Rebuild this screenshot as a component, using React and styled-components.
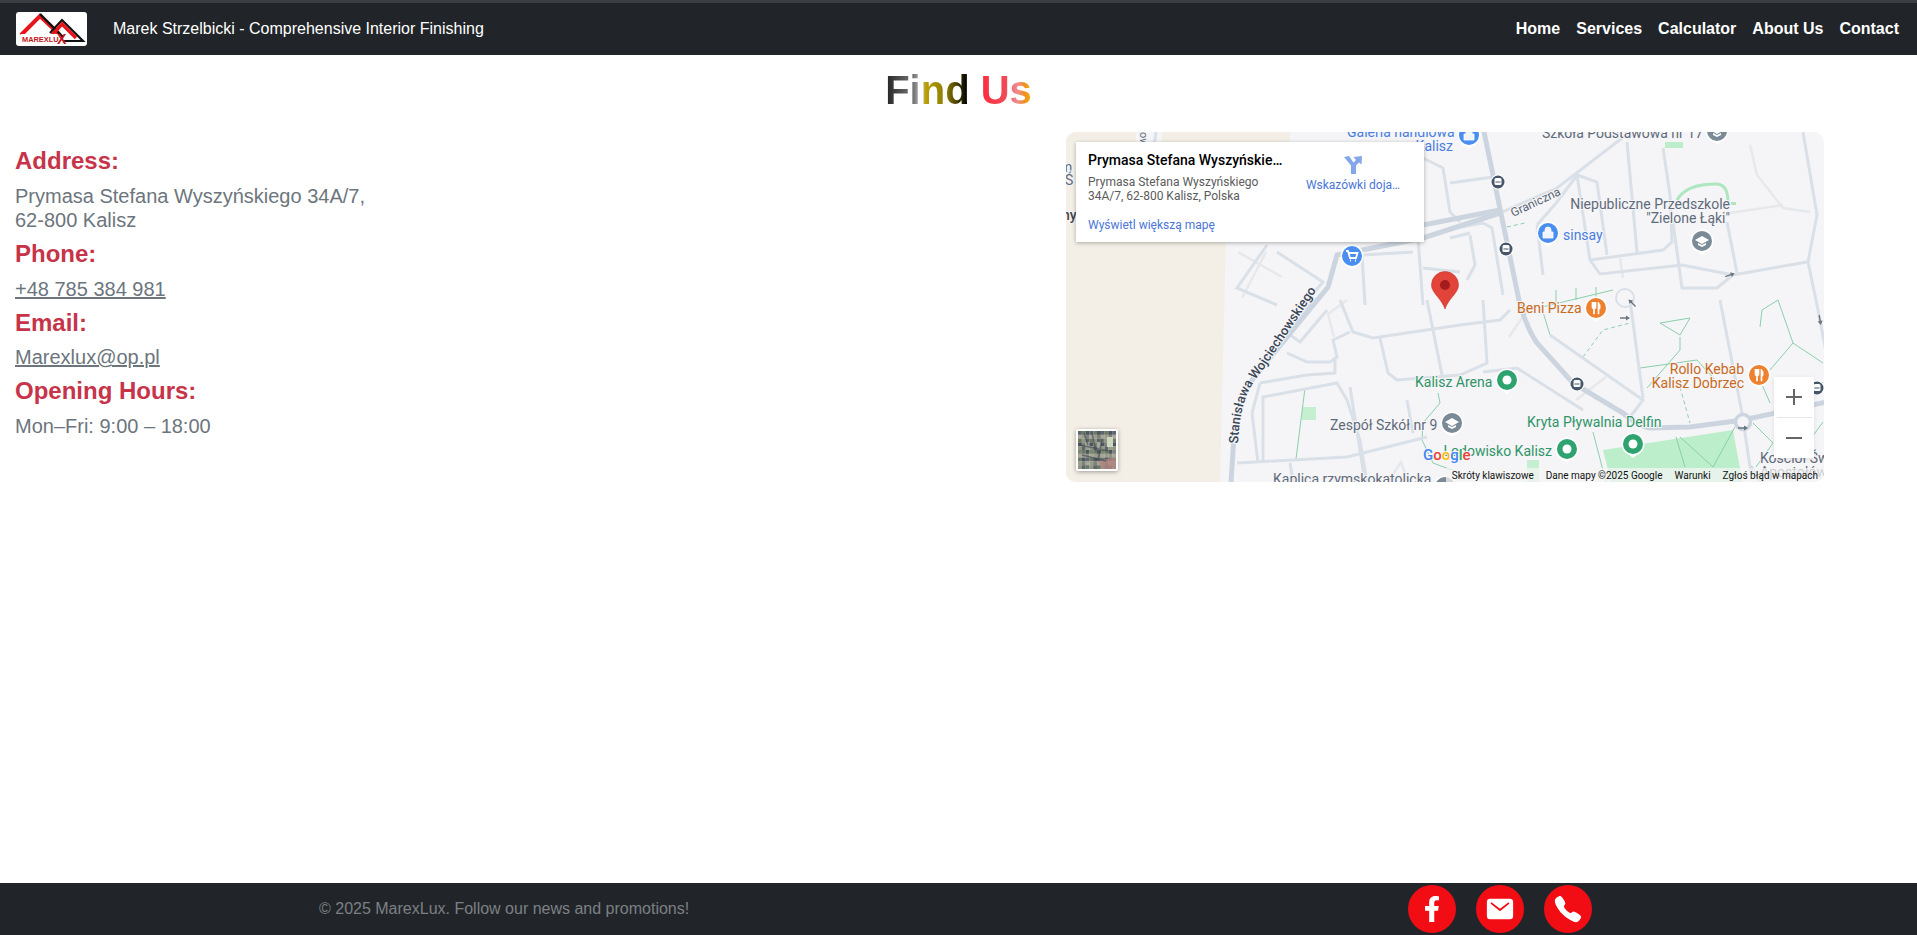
import React from "react";
import styled, { createGlobalStyle } from "styled-components";
import { FaFacebookF } from "react-icons/fa";
import { IoMail, IoCall } from "react-icons/io5";

const GlobalStyle = createGlobalStyle`
  html, body {
    margin: 0;
    padding: 0;
    background: #fff;
    font-family: "Liberation Sans", Arial, sans-serif;
  }
`;

const Page = styled.div`
  min-height: 935px;
  display: flex;
  flex-direction: column;
`;

const Header = styled.header`
  height: 52px;
  border-top: 3px solid #3b3f43;
  background: #212529;
  display: flex;
  align-items: center;
  padding: 0 18px 0 16px;
`;

const LogoBox = styled.div`
  width: 71px;
  height: 34px;
  background: #fff;
  border-radius: 3px;
  margin-right: 26px;
  svg {
    display: block;
  }
`;

const Brand = styled.span`
  color: #fff;
  font-size: 16px;
`;

const Nav = styled.nav`
  margin-left: auto;
  display: flex;
  gap: 16px;
  a {
    color: #fff;
    font-size: 16px;
    font-weight: 700;
    text-decoration: none;
  }
`;

const Main = styled.main`
  flex: 1;
`;

const Title = styled.h1`
  margin: 11px 0 18px;
  font-size: 40px;
  line-height: 48px;
  font-weight: 700;
  text-align: center;
  span {
    display: inline-block;
    color: transparent;
    background: linear-gradient(
      90deg,
      #222 0%,
      #7a7a7a 20%,
      #bbb 24%,
      #b8a000 28%,
      #8a7a00 42%,
      #000 56%,
      #ff3040 68%,
      #f04a58 82%,
      #f08a90 90%,
      #f09020 95%,
      #f5b000 100%
    );
    -webkit-background-clip: text;
    background-clip: text;
  }
`;

const Row = styled.section`
  display: flex;
  justify-content: space-between;
  padding: 0 93px 0 15px;
`;

const Info = styled.div`
  padding-top: 15px;
`;

const Label = styled.h3`
  margin: 0 0 8px;
  color: #c7344a;
  font-size: 24px;
  line-height: 28.8px;
  font-weight: 700;
`;

const Value = styled.p`
  margin: 0 0 8px;
  color: #6c757d;
  font-size: 20px;
  line-height: 24px;
  a {
    color: inherit;
  }
`;

const MapFrame = styled.div`
  position: relative;
  width: 758px;
  height: 350px;
  border-radius: 10px;
  overflow: hidden;
  background: #f5f5f7;
  font-family: Roboto, Arial, sans-serif;
  > svg {
    display: block;
  }
`;

const PlaceCard = styled.div`
  position: absolute;
  left: 10px;
  top: 10px;
  width: 348px;
  height: 100px;
  box-sizing: border-box;
  padding: 10px 12px;
  background: #fff;
  box-shadow: 0 1px 4px rgba(0, 0, 0, 0.3);
  display: flex;
  justify-content: space-between;
`;

const PlaceName = styled.div`
  width: 200px;
  font-size: 14px;
  line-height: 17px;
  font-weight: 500;
  color: #000;
  white-space: nowrap;
  overflow: hidden;
  text-overflow: ellipsis;
`;

const PlaceAddress = styled.div`
  margin-top: 6px;
  width: 180px;
  font-size: 12px;
  line-height: 14px;
  color: #5b5b5b;
`;

const MapLink = styled.a`
  font-size: 12px;
  color: #4a76d8;
  text-decoration: none;
`;

const LargerLink = styled(MapLink)`
  display: block;
  margin-top: 15px;
`;

const Directions = styled.div`
  width: 100px;
  margin: 3px 9px 0 0;
  display: flex;
  flex-direction: column;
  align-items: center;
  gap: 3px;
  white-space: nowrap;
`;

const ZoomControl = styled.div`
  position: absolute;
  left: 708px;
  top: 245px;
  width: 40px;
  height: 81px;
  background: #fff;
  box-shadow: 0 1px 4px rgba(0, 0, 0, 0.1);
  display: flex;
  flex-direction: column;
  align-items: center;
`;

const ZoomButton = styled.div`
  width: 35px;
  height: 40px;
  display: flex;
  align-items: center;
  justify-content: center;
  & + & {
    border-top: 1px solid #e6e6e6;
  }
`;

const Thumb = styled.div`
  position: absolute;
  left: 10px;
  top: 297px;
  width: 38px;
  height: 38px;
  border: 2px solid #fff;
  border-radius: 2px;
  box-shadow: 0 1px 4px rgba(0, 0, 0, 0.35);
  overflow: hidden;
  svg {
    display: block;
  }
`;

const Attribution = styled.div`
  position: absolute;
  right: 0;
  bottom: 0;
  height: 14px;
  display: flex;
  align-items: center;
  background: rgba(245, 245, 245, 0.72);
  font-size: 10px;
  color: #111;
  white-space: nowrap;
  span {
    padding: 0 6px;
  }
`;

const Footer = styled.footer`
  height: 52px;
  background: #212529;
  display: flex;
  align-items: center;
  justify-content: space-between;
  padding: 0 325px 0 319px;
`;

const Copy = styled.span`
  color: #7c8084;
  font-size: 16px;
`;

const Socials = styled.div`
  display: flex;
  gap: 20px;
`;

const Social = styled.a`
  width: 48px;
  height: 48px;
  border-radius: 50%;
  background: #f20d15;
  color: #fff;
  display: flex;
  align-items: center;
  justify-content: center;
  font-size: ${(p) => p.$size}px;
`;

const MapText = styled.text`
  font-family: Roboto, Arial, sans-serif;
  font-size: ${(p) => p.$size || 14}px;
  font-weight: ${(p) => p.$weight || 400};
  fill: ${(p) => p.$color};
  stroke: #f5f5f7;
  stroke-width: 2px;
  paint-order: stroke;
`;

const GREY = "#5f6b7a";
const BLUE = "#4a7de0";
const GREEN = "#2f9468";
const ORANGE = "#c96a1c";

const labels = [
  { x: 281, y: 5, t: "Galeria handlowa", c: BLUE },
  { x: 387, y: 19, t: "Kalisz", c: BLUE, end: true },
  { x: 476, y: 6, t: "Szkoła Podstawowa nr 17", c: GREY },
  { x: 664, y: 77, t: "Niepubliczne Przedszkole", c: GREY, end: true },
  { x: 664, y: 91, t: '"Zielone Łąki"', c: GREY, end: true },
  { x: 497, y: 108, t: "sinsay", c: BLUE },
  { x: 451, y: 181, t: "Beni Pizza", c: ORANGE },
  { x: 678, y: 242, t: "Rollo Kebab", c: ORANGE, end: true },
  { x: 678, y: 256, t: "Kalisz Dobrzec", c: ORANGE, end: true },
  { x: 349, y: 255, t: "Kalisz Arena", c: GREEN },
  { x: 264, y: 298, t: "Zespół Szkół nr 9", c: GREY },
  { x: 461, y: 295, t: "Kryta Pływalnia Delfin", c: GREEN },
  { x: 486, y: 324, t: "Lodowisko Kalisz", c: GREEN, end: true },
  { x: 207, y: 352, t: "Kaplica rzymskokatolicka", c: GREY },
  { x: 694, y: 331, t: "Kościół Św", c: GREY },
  { x: 694, y: 345, t: "Apostołów", c: GREY },
  { x: -6, y: 40, t: "m", c: GREY },
  { x: -1, y: 53, t: "Ś", c: GREY },
  { x: -4, y: 88, t: "ny", c: "#444", w: 500 },
];

const mainRoads = [
  "M417,-5 L454,173 Q462,198 471,211 L507,251 L557,281 Q572,294 584,296 L624,295 L677,288 L760,270",
  "M165,350 L168,305 Q172,262 194,238 L262,155 L271,123 L357,106 L434,81",
  "M357,93 L434,78",
  "M699,355 L684,335",
];

const sideRoads = [
  "M434,81 L491,56 L551,10 L572,-6",
  "M261,178 L234,210 L220,200 L248,168",
  "M221,221 L241,230 L264,230 L271,225 L267,208 L284,200",
  "M274,168 L287,200 L307,206 L394,193 L434,188 L444,178",
  "M361,168 L371,218 L377,248",
  "M314,206 L322,241 L331,248 L394,243 L421,231 L417,168",
  "M194,251 L241,243 L269,241 L269,225",
  "M186,281 L194,251 M186,281 L192,331",
  "M197,331 L197,265 L271,251 L281,268 L294,308 L301,350",
  "M171,331 L281,325 L361,305",
  "M224,331 L227,350",
  "M284,255 L299,350",
  "M341,268 L347,301",
  "M351,93 L357,173",
  "M357,136 L394,140",
  "M297,123 L347,120",
  "M296,123 L299,173",
  "M201,113 L171,156 L211,173",
  "M211,120 L257,150 L240,170",
  "M357,26 L377,36 L384,80 L394,90",
  "M561,10 L571,120",
  "M597,16 L604,63 L606,110 L597,118 L524,128",
  "M511,43 L531,50 L541,123",
  "M491,70 L511,43 L524,128 L534,142 L616,133 L667,143 L741,130",
  "M471,93 L477,143 M471,93 L491,70",
  "M607,90 L616,156 L651,156 L667,143",
  "M661,90 L671,141",
  "M737,0 L751,83 L742,130 L751,173 L760,220",
  "M384,51 L427,45",
  "M404,103 L409,133 L401,148",
  "M384,106 L404,101",
  "M389,96 L417,91 L426,96 L437,163",
  "M484,203 L577,268 L564,285",
  "M564,168 L577,266",
  "M654,168 L676,281 L684,335",
  "M417,240 L451,236 L517,278",
  "M74,0 L78,12 M90,0 L88,14",
];

const faintRoads = [
  "M684,13 L691,43 L717,76 L744,80",
  "M664,81 L717,73",
  "M554,126 L557,146",
  "M172,120 L216,145 M176,166 L200,120",
  "M281,168 L262,182 L268,205",
  "M443,205 L460,180",
  "M510,268 L540,245",
  "M322,350 L335,330 L342,350",
];

const greenLines = [
  "M594,191 L624,186 L614,203 Z",
  "M614,205 L614,218 L581,256",
  "M574,236 L631,228 L651,250",
  "M694,195 L696,178 L712,168 L727,211 L757,231",
  "M727,211 L704,238",
  "M694,248 L704,271",
  "M239,256 L230,327",
  "M372,261 L374,271 L357,291 L356,308 L367,331 L394,341",
  "M476,175 L547,158 M490,172 L490,158 M510,168 L510,156 M530,165 L530,155",
  "M477,180 L484,203",
  "M687,291 L707,311 L690,335",
  "M614,305 L647,335 L669,295",
  "M610,305 L619,335",
  "M527,300 L540,350",
  "M757,250 L740,270 M757,290 L735,320",
];

const dashedGreen = [
  "M517,225 L537,198 L564,191",
  "M614,255 L624,291",
  "M441,95 L459,91",
];

const pins = [
  { x: 403, y: 3, c: "#4a8ef0", k: "bag" },
  { x: 286, y: 124, c: "#4a8ef0", k: "cart" },
  { x: 482, y: 101, c: "#4a8ef0", k: "bag" },
  { x: 651, y: -1, c: "#7a8a96", k: "school" },
  { x: 636, y: 109, c: "#7a8a96", k: "school" },
  { x: 386, y: 291, c: "#7a8a96", k: "school" },
  { x: 379, y: 355, c: "#7a8a96", k: "school" },
  { x: 530, y: 176, c: "#ee8130", k: "food" },
  { x: 693, y: 243, c: "#ee8130", k: "food" },
  { x: 441, y: 248, c: "#2fa36f", k: "dot" },
  { x: 567, y: 312, c: "#2fa36f", k: "dot" },
  { x: 501, y: 317, c: "#2fa36f", k: "dot" },
];

const busStops = [
  [432, 50],
  [440, 117],
  [511, 252],
  [751, 256],
  [319, -6],
];

const arrows = [
  [664, 143, -18],
  [559, 186, 0],
  [566, 171, -135],
  [677, 296, 0],
  [754, 188, 80],
];

// mottled patches for the little satellite preview
const satelliteColors = ["#5d666e", "#7a8374", "#8f9580", "#4c555e", "#9a9c90", "#6d7a62", "#a8a59a"];
const satellitePatches = Array.from({ length: 100 }, (_, i) => ({
  x: (i % 10) * 3.8,
  y: Math.floor(i / 10) * 3.8,
  c: satelliteColors[(i * 7 + (i % 3) * 5 + Math.floor(i / 10)) % satelliteColors.length],
}));

const PinGlyph = ({ kind }) => {
  if (kind === "dot") return <circle r="4.5" fill="#fff" />;
  if (kind === "bag")
    return (
      <path
        d="M-5,-1 H5 V5 H-5 Z M-3,-1 V-3 A3,3 0 0 1 3,-3 V-1"
        fill="#fff"
        stroke="#fff"
        strokeWidth="0.8"
        fillOpacity="0.9"
      />
    );
  if (kind === "cart")
    return (
      <path
        d="M-6,-5 H-4 L-2,2 H4 L5.5,-3 H-3.4 M-2,4.5 h1 M3,4.5 h1"
        fill="none"
        stroke="#fff"
        strokeWidth="1.8"
      />
    );
  if (kind === "school")
    return <path d="M0,-5 L7,-1 L0,3 L-7,-1 Z M-4,2 V4 L0,6 L4,4 V2 L0,4 Z" fill="#fff" />;
  return (
    <path
      d="M-4,-6 V-1 Q-4,1 -2.5,1 V6 H-1.5 V1 Q0,1 0,-1 V-6 M-2,-6 V-2 M2,-6 Q5,-4 4,1 H3 V6 H2 Z"
      fill="#fff"
      stroke="#fff"
      strokeWidth="0.7"
    />
  );
};

const Pin = ({ x, y, c, k }) => (
  <g transform={`translate(${x} ${y})`}>
    <path d="M-8,7 L0,14 L8,7 Z" fill="#fff" />
    <circle r="11.5" fill="#fff" />
    <circle r="10" fill={c} />
    <PinGlyph kind={k} />
  </g>
);

const BusStop = ({ x, y }) => (
  <g transform={`translate(${x} ${y})`}>
    <circle r="7.5" fill="#fff" />
    <circle r="6.5" fill="#46566b" />
    <rect x="-3.5" y="-4" width="7" height="7" rx="1.5" fill="#fff" />
    <rect x="-2.5" y="-0.5" width="5" height="1" fill="#46566b" />
  </g>
);

const RoadMap = () => (
  <svg width="758" height="350" viewBox="0 0 758 350">
    <path d="M0,0 H224 V40 L160,105 L154,350 H0 Z" fill="#f3efe6" />
    <rect x="70" y="0" width="26" height="12" fill="#f5f5f7" />
    <path d="M537,318 L667,298 L674,336 L677,350 H545 Z" fill="#bdeecb" />
    <rect x="236" y="275" width="14" height="13" fill="#c5efd1" />
    <path d="M461,328 L473,328 L473,350 L461,350 Z" fill="#c5efd1" />
    <rect x="599" y="10" width="18" height="6" fill="#bdeecb" />
    <path d="M611,68 Q620,52 650,52 Q662,52 662,70" fill="none" stroke="#aee6c0" strokeWidth="3" />
    <rect x="665" y="70" width="5" height="3" fill="#aee6c0" />
    {faintRoads.map((d) => (
      <path key={d} d={d} fill="none" stroke="#e6e8ec" strokeWidth="2.5" />
    ))}
    {greenLines.map((d) => (
      <path key={d} d={d} fill="none" stroke="#8acfab" strokeWidth="1" />
    ))}
    {dashedGreen.map((d) => (
      <path key={d} d={d} fill="none" stroke="#8acfab" strokeWidth="1" strokeDasharray="4 3" />
    ))}
    {sideRoads.map((d) => (
      <path key={d} d={d} fill="none" stroke="#dae0e8" strokeWidth="3" />
    ))}
    {mainRoads.map((d) => (
      <path key={d} d={d} fill="none" stroke="#ccd5df" strokeWidth="5" />
    ))}
    <circle cx="677" cy="290" r="7.5" fill="#f5f5f7" stroke="#ccd5df" strokeWidth="3.5" />
    <circle cx="559" cy="166" r="9" fill="#f5f5f7" stroke="#dae0e8" strokeWidth="2" />
    {arrows.map(([x, y, r]) => (
      <path
        key={`${x}-${y}`}
        transform={`translate(${x} ${y}) rotate(${r})`}
        d="M-5,-0.7 H1 V-2.5 L5,0 L1,2.5 V0.7 H-5 Z"
        fill="#6b7683"
      />
    ))}
    <path id="stanislawa" d="M172,312 C174,272 182,255 197,238 L256,150" fill="none" />
    <MapText $size={13} $weight={500} $color="#3a4656">
      <textPath href="#stanislawa">Stanisława Wojciechowskiego</textPath>
    </MapText>
    <MapText $size={12} $color="#5b6675" transform="translate(447 85) rotate(-25)">
      Graniczna
    </MapText>
    <MapText $size={11} $color={GREY} transform="translate(74 0) rotate(90)">
      ow.
    </MapText>
    {busStops.map(([x, y]) => (
      <BusStop key={`${x}-${y}`} x={x} y={y} />
    ))}
    {labels.map((l) => (
      <MapText
        key={l.t}
        x={l.x}
        y={l.y}
        $color={l.c}
        $weight={l.w}
        textAnchor={l.end ? "end" : "start"}
      >
        {l.t}
      </MapText>
    ))}
    {pins.map((p) => (
      <Pin key={`${p.x}-${p.y}`} {...p} />
    ))}
    <MapText x="357" y="328" $size={15} $weight={500} $color="#4285f4">
      G<tspan fill="#ea4335">o</tspan>
      <tspan fill="#fbbc05">o</tspan>
      <tspan fill="#4285f4">g</tspan>
      <tspan fill="#34a853">l</tspan>
      <tspan fill="#ea4335">e</tspan>
    </MapText>
    <g transform="translate(379 140)">
      <path
        d="M0,37 C-3,27 -13.5,21 -13.5,13 A13.5,13.5 0 0 1 13.5,13 C13.5,21 3,27 0,37 Z"
        fill="#e2443a"
        stroke="#c5362d"
        strokeWidth="0.6"
      />
      <circle cy="13" r="5" fill="#a51c1c" />
    </g>
  </svg>
);

const SatelliteThumb = () => (
  <svg width="38" height="38" viewBox="0 0 38 38">
    {satellitePatches.map((p) => (
      <rect key={`${p.x}-${p.y}`} x={p.x} y={p.y} width="3.9" height="3.9" fill={p.c} />
    ))}
    <rect x="29" y="6" width="6" height="10" fill="#cfd6bf" />
    <path d="M20,30 L38,26 V38 H24 Z" fill="#b0837f" opacity="0.8" />
    <path
      d="M6,2 L10,14 M14,2 L18,20 M2,14 L30,20 M4,24 L28,30 M24,8 L20,30"
      stroke="#3d464f"
      strokeWidth="1.5"
      opacity="0.6"
    />
  </svg>
);

const DirectionsIcon = () => (
  <svg width="20" height="20" viewBox="0 0 20 20">
    <path d="M1,2 L6,1 L10.5,7.5 L13,5 L10.5,2 L19,1 L18.5,9.5 L16,7.5 L13,10.5 V19 H8 V10.5 Z" fill="#84a7ea" />
  </svg>
);

const Logo = () => (
  <svg width="71" height="34" viewBox="0 0 71 34">
    <path d="M5,23 L24,4 L43,22" fill="none" stroke="#e8141c" strokeWidth="4" />
    <path d="M24,2 L47,25" fill="none" stroke="#111" strokeWidth="2.4" />
    <path d="M34,21 L46,8 L67,29 L47,29" fill="none" stroke="#111" strokeWidth="2.2" />
    <path d="M36,23 L46,12 L60,26" fill="none" stroke="#e8141c" strokeWidth="3.4" />
    <rect x="5" y="22" width="37" height="10" fill="#fff" />
    <text x="6" y="30" fontFamily="Liberation Sans" fontSize="7.4" fontWeight="700" fill="#c41420">
      MAREXLU
    </text>
    <text x="41" y="32" fontFamily="Liberation Sans" fontSize="14" fontWeight="700" fill="#c41420">
      X
    </text>
  </svg>
);

const App = () => (
  <Page>
    <GlobalStyle />
    <Header>
      <LogoBox>
        <Logo />
      </LogoBox>
      <Brand>Marek Strzelbicki - Comprehensive Interior Finishing</Brand>
      <Nav>
        <a href="#home">Home</a>
        <a href="#services">Services</a>
        <a href="#calculator">Calculator</a>
        <a href="#about">About Us</a>
        <a href="#contact">Contact</a>
      </Nav>
    </Header>
    <Main>
      <Title>
        <span>Find Us</span>
      </Title>
      <Row>
        <Info>
          <Label>Address:</Label>
          <Value>
            Prymasa Stefana Wyszyńskiego 34A/7,
            <br />
            62-800 Kalisz
          </Value>
          <Label>Phone:</Label>
          <Value>
            <a href="tel:+48785384981">+48 785 384 981</a>
          </Value>
          <Label>Email:</Label>
          <Value>
            <a href="mailto:Marexlux@op.pl">Marexlux@op.pl</a>
          </Value>
          <Label>Opening Hours:</Label>
          <Value>Mon–Fri: 9:00 – 18:00</Value>
        </Info>
        <MapFrame>
          <RoadMap />
          <PlaceCard>
            <div>
              <PlaceName>Prymasa Stefana Wyszyńskiego 34A/7</PlaceName>
              <PlaceAddress>Prymasa Stefana Wyszyńskiego 34A/7, 62-800 Kalisz, Polska</PlaceAddress>
              <LargerLink href="#map">Wyświetl większą mapę</LargerLink>
            </div>
            <Directions>
              <DirectionsIcon />
              <MapLink href="#directions">Wskazówki doja…</MapLink>
            </Directions>
          </PlaceCard>
          <Thumb>
            <SatelliteThumb />
          </Thumb>
          <ZoomControl>
            <ZoomButton>
              <svg width="18" height="18" viewBox="0 0 18 18">
                <path d="M9,1 V17 M1,9 H17" stroke="#666" strokeWidth="2" />
              </svg>
            </ZoomButton>
            <ZoomButton>
              <svg width="18" height="18" viewBox="0 0 18 18">
                <path d="M1,9 H17" stroke="#666" strokeWidth="2" />
              </svg>
            </ZoomButton>
          </ZoomControl>
          <Attribution>
            <span>Skróty klawiszowe</span>
            <span>Dane mapy ©2025 Google</span>
            <span>Warunki</span>
            <span>Zgłoś błąd w mapach</span>
          </Attribution>
        </MapFrame>
      </Row>
    </Main>
    <Footer>
      <Copy>© 2025 MarexLux. Follow our news and promotions!</Copy>
      <Socials>
        <Social href="#facebook" $size={26}>
          <FaFacebookF />
        </Social>
        <Social href="#mail" $size={30}>
          <IoMail />
        </Social>
        <Social href="#phone" $size={30}>
          <IoCall />
        </Social>
      </Socials>
    </Footer>
  </Page>
);

export default App;
